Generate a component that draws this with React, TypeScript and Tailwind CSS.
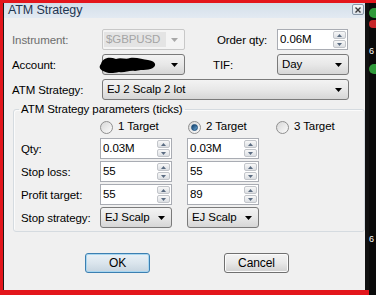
import React from "react";

function DownArrow({ fill = "#000" }: { fill?: string }) {
  return (
    <svg width="7" height="4" viewBox="0 0 7 4">
      <path d="M0 0H7L3.5 4Z" fill={fill} />
    </svg>
  );
}

function Combo({ text, className }: { text: string; className: string }) {
  return (
    <div
      className={`h-[21px] flex items-center justify-between pl-[4px] pr-[6px] rounded-[3px] border border-[#7a7a7a] bg-gradient-to-b from-[#f3f3f3] via-[#e8e8e8] to-[#d6d6d6] ${className}`}
    >
      <span>{text}</span>
      <DownArrow />
    </div>
  );
}

function SpinBtn({ up }: { up?: boolean }) {
  return (
    <div className="flex-1 flex items-center justify-center rounded-[2px] border border-[#c2c5ca] bg-gradient-to-b from-[#f8f8f8] to-[#dcdfe3]">
      <svg width="5" height="3" viewBox="0 0 5 3">
        <path d={up ? "M0 3H5L2.5 0Z" : "M0 0H5L2.5 3Z"} fill="#5b6c82" />
      </svg>
    </div>
  );
}

function Spin({ value, className }: { value: string; className: string }) {
  return (
    <div className={`h-[21px] flex bg-white border border-[#a9acb3] ${className}`}>
      <div className="flex-1 pl-[2px] pt-[2px] leading-[14px]">{value}</div>
      <div className="w-[14px] flex flex-col gap-[1px] py-[1px] pr-[1px]">
        <SpinBtn up />
        <SpinBtn />
      </div>
    </div>
  );
}

function Radio({ label, checked }: { label: string; checked?: boolean }) {
  return (
    <div className="w-[88px] flex items-center gap-[5px]">
      <div className="w-[13px] h-[13px] rounded-full border border-[#8f8f8f] bg-gradient-to-br from-[#d8d8d8] to-[#fbfbfb] flex items-center justify-center">
        {checked && (
          <div className="w-[7px] h-[7px] rounded-full border border-[#1d4f7c] bg-gradient-to-br from-[#0f3d66] to-[#6aa7d6]" />
        )}
      </div>
      <span>{label}</span>
    </div>
  );
}

function ParamRow({ label, children }: { label: string; children: React.ReactNode }) {
  return (
    <div className="flex items-center h-[21px]">
      <div className="w-[79px] pt-[3px]">{label}</div>
      {children}
    </div>
  );
}

export default function App() {
  return (
    <div className="w-[376px] h-[295px] flex bg-[#e3161c] font-['Liberation_Sans',Arial,sans-serif] text-[11.5px] tracking-[-0.1px] text-black overflow-hidden">
      <div className="w-[369px] flex flex-col">
        <div className="h-[3px]" />
        <div className="h-[287px] flex">
          <div className="w-[3px]" />
          <div className="w-[1px] bg-[#1a1a1a]" />

          {/* dialog window */}
          <div className="w-[361px] flex flex-col bg-[#f0f0f0]">
            <div className="h-[15px] flex items-start justify-between bg-gradient-to-b from-[#d3dfea] to-[#e3eaf2]">
              <span className="pl-[4px] text-[12.5px] leading-[15px] text-[#1f3550]">ATM Strategy</span>
              <div className="mt-[1px] mr-[1px] w-[12px] h-[11px] rounded-[2px] border border-[#8797a8] bg-gradient-to-b from-[#f4f6f8] to-[#dde3ea] flex items-center justify-center">
                <svg width="6" height="6" viewBox="0 0 6 6">
                  <path d="M0.5 0.5L5.5 5.5M5.5 0.5L0.5 5.5" stroke="#3a3a3a" strokeWidth="1.4" />
                </svg>
              </div>
            </div>

            <div className="flex flex-col pt-[11px] gap-[4px]">
              <div className="flex items-center pl-[8px]">
                <div className="w-[90px] pt-[3px] text-[#6d6d6d]">Instrument:</div>
                <div className="w-[83px] h-[21px] flex items-center justify-between pl-[1px] pr-[6px] rounded-[2px] border border-[#c8c8c8] bg-[#f4f4f4]">
                  <span className="w-[62px] h-[15px] pl-[2px] leading-[15px] bg-[#e4e4e4] text-[#a5a5a5]">$GBPUSD</span>
                  <DownArrow fill="#a8a8a8" />
                </div>
                <div className="ml-[32px] w-[60px] pt-[3px]">Order qty:</div>
                <Spin value="0.06M" className="w-[71px]" />
              </div>

              <div className="flex items-center pl-[8px]">
                <div className="w-[90px] pt-[3px]">Account:</div>
                <div className="relative">
                  <Combo text="" className="w-[83px]" />
                  <svg className="absolute left-[-3px] top-[1px]" width="60" height="20" viewBox="0 0 60 20">
                    <path
                      d="M2 9C3 4 9 1 17 4C22 2 27 5 31 3C38 2 44 5 49 5C55 6 58 9 55 12C51 16 44 14 36 16C30 15 26 18 20 17C12 19 8 18 4 16C0 14 0 11 2 9Z"
                      fill="#000"
                    />
                  </svg>
                </div>
                <div className="ml-[28px] w-[64px] pt-[3px]">TIF:</div>
                <Combo text="Day" className="w-[72px]" />
              </div>

              <div className="flex items-center pl-[8px]">
                <div className="w-[90px] pt-[3px]">ATM Strategy:</div>
                <Combo text="EJ 2 Scalp 2 lot" className="w-[247px]" />
              </div>
            </div>

            <fieldset className="ml-[9px] mt-[2px] w-[344px] pl-[7px] pb-[3px] border border-[#d5dbe0] rounded-[3px] shadow-[inset_1px_1px_0_#fbfbfb] flex flex-col">
              <legend className="-ml-[2px] px-[2px] leading-[14px]">ATM Strategy parameters (ticks)</legend>
              <div className="flex mt-[4px] h-[14px] pl-[79px]">
                <Radio label="1 Target" />
                <Radio label="2 Target" checked />
                <Radio label="3 Target" />
              </div>
              <div className="flex flex-col gap-[2px] mt-[4px]">
                <ParamRow label="Qty:">
                  <Spin value="0.03M" className="w-[72px]" />
                  <Spin value="0.03M" className="w-[72px] ml-[15px]" />
                </ParamRow>
                <ParamRow label="Stop loss:">
                  <Spin value="55" className="w-[72px]" />
                  <Spin value="55" className="w-[72px] ml-[15px]" />
                </ParamRow>
                <ParamRow label="Profit target:">
                  <Spin value="55" className="w-[72px]" />
                  <Spin value="89" className="w-[72px] ml-[15px]" />
                </ParamRow>
                <ParamRow label="Stop strategy:">
                  <Combo text="EJ Scalp" className="w-[72px]" />
                  <Combo text="EJ Scalp" className="w-[72px] ml-[15px]" />
                </ParamRow>
              </div>
            </fieldset>

            <div className="flex mt-[21px] pl-[81px] gap-[74px]">
              <button className="w-[65px] h-[20px] rounded-[3px] border border-[#3c7fb1] bg-gradient-to-b from-[#e9f1f7] via-[#dbe5ed] to-[#c6d4df] shadow-[inset_0_0_0_1px_#a8d6f0] text-[12px]">
                OK
              </button>
              <button className="w-[65px] h-[20px] rounded-[3px] border border-[#707070] bg-gradient-to-b from-[#f4f4f4] via-[#e8e8e8] to-[#d0d0d0] shadow-[inset_0_0_0_1px_#fbfbfb] text-[12px]">
                Cancel
              </button>
            </div>
          </div>

          <div className="w-[4px] bg-[#111]" />
        </div>
        <div className="h-[5px]" />
      </div>

      {/* background app peeking out on the right */}
      <div className="w-[7px] flex flex-col">
        <div className="h-[3px]" />
        <div className="flex-1 bg-[#0a0a0a] flex flex-col items-start">
          <div className="mt-[5px] w-[7px] h-[10px] rounded-l-full bg-[#2f9a3a]" />
          <div className="mt-[2px] w-[7px] h-[8px] rounded-l-full bg-[#c8262a]" />
          <div className="mt-[18px] text-[9px] leading-[10px] text-white">6</div>
          <div className="mt-[8px] w-[7px] h-[10px] rounded-l-full bg-[#2f9a3a]" />
          <div className="mt-[160px] text-[9px] leading-[10px] text-white">6</div>
        </div>
      </div>
    </div>
  );
}
